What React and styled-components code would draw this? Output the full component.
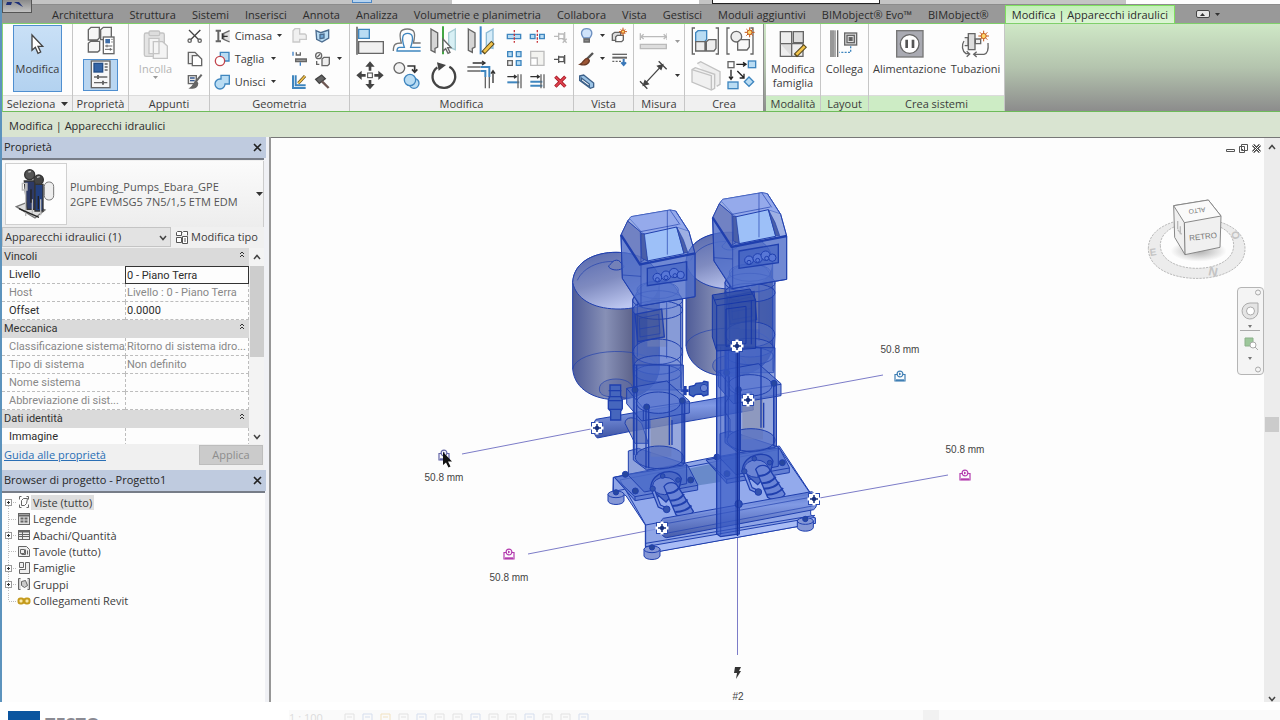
import React from "react";
import styled, { createGlobalStyle, css } from "styled-components";

const Global = createGlobalStyle`
  * { box-sizing: border-box; }
  html, body { margin: 0; height: 100%; overflow: hidden; }
  body, button, input, select, table {
    font-family: "Open Sans", "Noto Sans", sans-serif;
    font-size: 11px;
    line-height: 14px;
    color: #3c3c3c;
  }
  #root { height: 100%; }
`;

/* ---------- shell ---------- */
const Shell = styled.div`
  height: 100vh;
  display: flex;
  flex-direction: column;
  background: #fdfdfd;
`;
const Frame = styled.div`
  flex: 1;
  min-height: 0;
  display: flex;
  flex-direction: column;
  border-left: 2px solid #5c93bd;
`;

/* ---------- title bar ---------- */
const TitleBar = styled.header`
  position: relative;
  height: 5px;
  flex: none;
  display: flex;
  justify-content: flex-end;
  background: #c4c4c4;
  border-bottom: 1px solid #8c8c8c;
`;
const QuickMark = styled.span`
  width: 20px;
  height: 3px;
  margin-right: 80px;
  background: #b5d3f0;
  border: 1px solid #4b86c4;
  border-top: 0;
`;
const TitleCaption = styled.div`
  width: 247px;
  background: #fdfdfd;
  margin-right: 13px;
`;
const SearchStub = styled.div`
  width: 168px;
  background: #fff;
  border: 1px solid #222;
  border-top: 0;
  margin-right: 246px;
`;
const TitleEnd = styled.div`
  width: 154px;
  background: #fdfdfd;
`;
const AppButton = styled.button`
  position: absolute;
  left: 0;
  top: 0;
  width: 30px;
  height: 13px;
  padding: 0;
  border: 1px solid #555;
  border-top: 0;
  background: linear-gradient(#8a8a8a, #c2c2c2);
  z-index: 2;
  svg { display: block; }
`;

/* ---------- ribbon tabs ---------- */
const Tabs = styled.nav`
  height: 19px;
  flex: none;
  display: flex;
  padding-left: 42px;
  background: #999;
  border-bottom: 1px solid #7fd06a;
`;
const Tab = styled.button`
  border: 0;
  margin: 0;
  padding: 1px 8px 0;
  background: none;
  white-space: nowrap;
  color: #2c2c2c;
  ${(p) =>
    p.$active &&
    css`
      margin-left: 8px;
      padding: 0 6px;
      background: linear-gradient(#c3efb8, #dcf5d5);
      border: 1px solid #7fe05f;
      border-bottom: 0;
    `}
`;
const TabTools = styled.div`
  display: flex;
  align-items: center;
  gap: 5px;
  margin-left: 21px;
`;
const MinimizeRibbon = styled.button`
  width: 14px;
  height: 8px;
  padding: 0;
  border: 1px solid #444;
  border-radius: 2px;
  background: #e6e6e6;
  display: flex;
  align-items: center;
  justify-content: center;
`;

/* ---------- ribbon ---------- */
const Ribbon = styled.section`
  height: 88px;
  flex: none;
  display: flex;
  border-left: 1px solid #8bd47a;
  border-bottom: 1px solid #6ebb5a;
  background: linear-gradient(#cfe8c6, #b4c4ae 50%, #8c8c8c);
`;
const Panel = styled.div`
  width: ${(p) => p.$w}px;
  flex: none;
  display: flex;
  flex-direction: column;
  background: #fdfdfd;
  border-right: 1px solid #c6c6c6;
  ${(p) => p.$gap && css`margin-right: 2px; border-right-color: #8d8d8d;`}
`;
const PanelBody = styled.div`
  flex: 1;
  display: flex;
  align-items: flex-start;
  justify-content: center;
  gap: ${(p) => p.$gap || 0}px;
`;
const PanelTitle = styled.div`
  height: 16px;
  display: flex;
  align-items: center;
  justify-content: center;
  gap: 6px;
  white-space: nowrap;
  border-top: 1px solid #dcdcdc;
  background: ${(p) => (p.$green ? "#cdecc5" : "#f0f0f0")};
`;
const Tool = styled.button`
  border: 0;
  background: none;
  padding: 0;
  display: flex;
  align-items: center;
  justify-content: ${(p) => (p.$left ? "flex-start" : "center")};
  gap: 4px;
  min-width: 0;
  white-space: nowrap;
  svg { flex: none; }
`;
const BigTool = styled.button`
  width: ${(p) => p.$w}px;
  height: 67px;
  margin-top: 1px;
  border: 1px solid ${(p) => (p.$on ? "#4f8fd0" : "transparent")};
  background: ${(p) => (p.$on ? "linear-gradient(#c9e0f6, #b3d2f0)" : "none")};
  padding: 0;
  display: flex;
  flex-direction: column;
  align-items: center;
  color: ${(p) => (p.$dim ? "#b4b4b4" : "#3c3c3c")};
  white-space: nowrap;
`;
const BigIcon = styled.span`
  height: 36px;
  display: flex;
  align-items: center;
  justify-content: center;
`;
const Grid = styled.div`
  display: grid;
  grid-template-columns: ${(p) => p.$cols};
  grid-auto-rows: ${(p) => p.$row || 23}px;
`;
const PropToggle = styled(Tool)`
  width: 35px;
  height: ${(p) => (p.$on ? 32 : 33)}px;
  border: 1px solid ${(p) => (p.$on ? "#4f8fd0" : "transparent")};
  background: ${(p) => (p.$on ? "#b9d6f1" : "none")};
`;
const OptionsBar = styled.div`
  height: 25px;
  flex: none;
  padding: 7px 7px 0;
  background: #d9e4d1;
  color: #2a2a2a;
`;

/* ---------- work area ---------- */
const Work = styled.main`
  flex: 1;
  min-height: 0;
  display: flex;
`;
const Side = styled.aside`
  width: 269px;
  flex: none;
  display: flex;
  flex-direction: column;
  padding-right: 3px;
  background: #f0f1f5;
  border-right: 2px solid #979797;
`;
const DockTitle = styled.h2`
  height: 21px;
  flex: none;
  margin: 0;
  padding: 0 4px 1px 2px;
  display: flex;
  align-items: center;
  justify-content: space-between;
  font-size: 11px;
  font-weight: 400;
  color: #262626;
  background: #bfcbdf;
`;
const CloseButton = styled.button`
  border: 0;
  background: none;
  padding: 0;
  width: 9px;
  height: 9px;
  svg { display: block; }
`;
const Properties = styled.section`
  margin-right: 2px;
  padding-top: 1px;
  border-top: 2px solid #777d88;
  background: #f0f0f0;
`;
const TypePicker = styled.button`
  width: 100%;
  height: 66px;
  padding: 0 0 0 3px;
  border: 0;
  border-right: 1px solid #ccc;
  display: flex;
  align-items: center;
  gap: 3px;
  text-align: left;
  line-height: 15px;
  color: #555;
  background: linear-gradient(#fbfbfb, #ededed);
`;
const Thumb = styled.span`
  width: 62px;
  height: 62px;
  border: 1px solid #d0d0d0;
  background: #fdfdfd;
  display: flex;
  align-items: center;
  justify-content: center;
`;
const TypeText = styled.span`
  flex: 1;
  white-space: nowrap;
`;
const FilterRow = styled.div`
  height: 21px;
  display: flex;
  align-items: flex-start;
  gap: 5px;
`;
const EditType = styled(Tool)`
  height: 20px;
  gap: 2px;
`;
const SelectBox = styled.label`
  position: relative;
  width: 169px;
  svg { position: absolute; right: 4px; top: 8px; pointer-events: none; }
`;
const Select = styled.select`
  appearance: none;
  width: 100%;
  height: 20px;
  padding: 0 2px;
  border: 1px solid #c4c4c4;
  border-radius: 0;
  background: #e3e3e3;
  color: #333;
`;
const GridWrap = styled.div`
  height: 196px;
  display: flex;
  overflow: hidden;
`;
const PropTable = styled.table`
  width: 247px;
  table-layout: fixed;
  border-collapse: separate;
  border-spacing: 0;
  font-family: Roboto, "Open Sans", sans-serif;
  background: #fdfdfd;
`;
const GroupCell = styled.th`
  height: 18px;
  padding: 0 4px 0 2px;
  font-weight: 400;
  text-align: left;
  background: #dadada;
  color: #333;
  div { display: flex; justify-content: space-between; }
`;
const NameCell = styled.th`
  height: 18px;
  padding: 0 0 0 7px;
  white-space: nowrap;
  text-align: left;
  font-weight: 400;
  color: ${(p) => (p.$dim ? "#888" : "#2c2c2c")};
  border-bottom: 1px dashed #bdbdbd;
`;
const ValueCell = styled.td`
  height: 18px;
  padding: 0 0 0 1px;
  white-space: nowrap;
  color: ${(p) => (p.$dim ? "#888" : "#2c2c2c")};
  border-bottom: 1px dashed #bdbdbd;
  border-left: 1px dashed #bdbdbd;
  border-right: 1px dashed #bdbdbd;
  ${(p) => p.$edit && css`border: 1px solid #333;`}
`;
const ValueInput = styled.input`
  display: block;
  width: 100%;
  height: 16px;
  border: 0;
  padding: 0;
  background: none;
  outline: 0;
  color: inherit;
  font-family: inherit;
`;
const GridScroll = styled.div`
  flex: 1;
  display: flex;
  flex-direction: column;
  align-items: center;
  padding: 6px 0 4px;
  gap: 6px;
  background: #f3f3f3;
`;
const GridThumb = styled.span`
  width: 14px;
  height: 91px;
  background: #cdcdcd;
`;
const GridSpacer = styled.span`
  flex: 1;
`;
const PropFooter = styled.div`
  height: 26px;
  padding: 1px 1px 0 2px;
  display: flex;
  justify-content: space-between;
  background: #f0f0f0;
  a { color: #2a6fb5; padding-top: 3px; }
`;
const Apply = styled.button`
  width: 64px;
  height: 20px;
  padding: 0;
  border: 1px solid #bdbdbd;
  background: #cbcbcb;
  color: #8d8d8d;
`;
const Browser = styled.section`
  flex: 1;
  margin-right: 1px;
  padding-top: 1px;
  border-top: 2px solid #777d88;
  background: #fdfdfd;
`;
const Tree = styled.ul`
  list-style: none;
  margin: 0;
  padding: 0 0 0 2px;
  height: 115px;
  display: flex;
  flex-direction: column;
`;
const TreeItem = styled.li`
  flex: 1;
  min-height: 0;
  display: flex;
  align-items: center;
  svg { flex: none; }
`;
const TreeLabel = styled.span`
  padding: 0 2px;
  line-height: 15px;
  background: ${(p) => (p.$on ? "#dedede" : "none")};
`;

/* ---------- canvas ---------- */
const Canvas = styled.section`
  position: relative;
  flex: 1;
  min-width: 0;
  overflow: hidden;
  background: #fdfdfd;
  border-top: 1px solid #777;
`;
const Tag = styled.span`
  position: absolute;
  left: ${(p) => p.$x - 40}px;
  top: ${(p) => p.$y - 6}px;
  width: 80px;
  text-align: center;
  font-family: "Liberation Sans", sans-serif;
  font-size: 10px;
  color: #444;
`;
const WindowTools = styled.div`
  position: absolute;
  right: 3px;
  top: 6px;
  display: flex;
  gap: 4px;
`;
const CubePlace = styled.div`
  position: absolute;
  right: 17px;
  top: 59px;
`;
const NavBar = styled.div`
  position: absolute;
  right: 0;
  top: 149px;
  width: 27px;
  height: 88px;
  border: 1px solid #b5b5b5;
  border-radius: 4px;
  background: #f4f4f4;
  svg { display: block; }
`;
const VScroll = styled.div`
  width: 16px;
  flex: none;
  display: flex;
  flex-direction: column;
  justify-content: space-between;
  align-items: center;
  padding: 6px 0 0;
  background: #ececec;
  border-top: 1px solid #777;
`;
const VThumb = styled.span`
  width: 14px;
  height: 15px;
  margin-top: 2px;
  background: #cbcbcb;
`;

/* ---------- footer ---------- */
const Footer = styled.footer`
  height: 18px;
  flex: none;
  display: flex;
  overflow: hidden;
  background: #fff;
  padding: 8px 0 0 8px;
`;
const Brand = styled.div`
  width: 281px;
  display: flex;
  gap: 5px;
  font-size: 18px;
  line-height: 28px;
  font-weight: 700;
  color: #8b8b93;
`;
const BrandMark = styled.span`
  width: 32px;
  height: 32px;
  margin-top: 1px;
  background: #0b559f;
`;
const StatusBar = styled.div`
  flex: 1;
  display: flex;
  align-items: flex-start;
  background: #fafafa;
  color: #dcdcdc;
  line-height: 16px;
`;
const StatusThumb = styled.span`
  width: 16px;
  height: 10px;
  margin-left: 316px;
  background: #f1f1f1;
`;

/* ---------- icons ---------- */
/* Icons are drawn on a grid of three units to the pixel. */
const Icon = ({ v, children, ...rest }) => {
  const [, , w, h] = v.split(" ").map(Number);
  return (
    <svg viewBox={v} width={w / 3} height={h / 3} fill="none" strokeWidth="4" stroke="#666" aria-hidden="true" {...rest}>
      {children}
    </svg>
  );
};
const Caret = ({ dim, up, wide }) => (
  <svg width={wide ? 7 : 5} height={wide ? 4 : 3} viewBox="0 0 5 3" preserveAspectRatio="none" aria-hidden="true">
    <path d={up ? "M0 3h5L2.500 0z" : "M0 0h5L2.500 3z"} fill={dim ? "#999" : "#333"} />
  </svg>
);
const Chevron = ({ up }) => (
  <svg width="8" height="6" viewBox="0 0 8 6" fill="none" stroke="#444" strokeWidth="1.500" aria-hidden="true">
    <path d={up ? "M1 5l3-3.500L7 5" : "M1 1l3 3.500L7 1"} />
  </svg>
);
const Cross = () => (
  <svg width="9" height="9" viewBox="0 0 9 9" stroke="#222" strokeWidth="1.600" aria-hidden="true">
    <path d="M1 1l7 7M8 1l-7 7" />
  </svg>
);
const B = "#b9dcf3";
const BL = "#3f86bf";

const Burst = ({ x, y, r }) => (
  <g stroke="#c55a1c" strokeWidth="3">
    <path d={`M${x} ${y - r - 5}v${2 * r + 10}M${x - r - 5} ${y}h${2 * r + 10}M${x - r} ${y - r}l${2 * r} ${2 * r}M${x + r} ${y - r}l${-2 * r} ${2 * r}`} />
    <circle cx={x} cy={y} r={r * 0.7} fill="#ffd86a" />
  </g>
);
const Brackets = ({ x }) => <path d={`M${x + 10} 86h-8v78h8M${x + 72} 86h8v78h-8`} strokeWidth="4" />;

const ArrowIcon = () => (
  <Icon v="90 92 45 64"><path d="M96 98v46l10-9 8 18 8-4-8-17h14z" fill="#fff" stroke="#444" /></Icon>
);
const TypePropsIcon = () => (
  <Icon v="255 82 90 88">
    <g fill="#f6f6f6"><path d="M262 93l8-7h25v32l-6 6h-27zM299 93l8-7h24v32l-6 5h-26zM262 134l7-6h27v27l-6 5h-28z" /></g>
    <rect x="307" y="115" width="32" height="50" fill="#fff" />
    <rect x="313" y="121" width="14" height="13" fill="#3f6ea8" stroke="none" />
    <path d="M331 122h4M331 130h4M312 142h22M312 152h22M318 138v8M328 148v8" strokeWidth="3" />
  </Icon>
);
const PropsIcon = () => (
  <Icon v="265 182 66 88">
    <rect x="269" y="185" width="56" height="80" fill="#f7f7f7" />
    <rect x="277" y="192" width="26" height="26" fill="#3565a6" stroke="#244f88" />
    <path d="M309 194h9M309 203h9M309 212h9M277 233h40M277 250h40" /><path d="M289 227v12M304 244v12" strokeWidth="6" />
  </Icon>
);
const PasteIcon = () => (
  <Icon v="432 78 84 92" stroke="#c4c4c4">
    <rect x="439" y="90" width="60" height="70" rx="5" fill="#e4e4e4" /><rect x="453" y="84" width="32" height="14" rx="4" fill="#ddd" />
    <path d="M453 106h30v46h-30zM466 116h28l14 13v37h-42z" fill="#f4f4f4" />
  </Icon>
);
const ScissorsIcon = () => (
  <Icon v="562 84 48 48"><path d="M568 90l30 30M602 90l-30 30" stroke="#444" /><circle cx="570" cy="122" r="5" /><circle cx="600" cy="122" r="5" /></Icon>
);
const CopyIcon = () => (
  <Icon v="562 154 48 48"><path d="M566 158h20l8 8v26h-28z" fill="#eee" /><path d="M578 168h18l10 10v20h-28z" fill="#fff" /></Icon>
);
const MatchIcon = () => (
  <Icon v="562 224 48 48"><path d="M566 229h24v24h-24z" fill="#e6e6e6" /><path d="M571 236h14M571 244h14" stroke="#3a5c94" /><path d="M606 226l-20 24" strokeWidth="6" /><path d="M590 246c-8 2-8 14-18 20 14 2 22-4 22-14z" fill="#666" /></Icon>
);
const CopeIcon = () => (
  <Icon v="643 84 50 48"><path d="M648 92h16M648 124h16M656 92v32" strokeWidth="6" /><path d="M690 92l-18 8v18l18 8" fill="#ddd" /><path d="M670 109h14M668 100v18" stroke="#333" /></Icon>
);
const CutIcon = () => (
  <Icon v="643 154 50 48"><path d="M662 158h26v26h-26z" fill={B} stroke={BL} /><circle cx="661" cy="184" r="14" fill="#fff" stroke="#c2464e" /></Icon>
);
const JoinIcon = () => (
  <Icon v="643 224 50 48"><path d="M664 228h25v26h-13a15 15 0 1 1-15-15h3z" fill={B} stroke={BL} /></Icon>
);
const WallOpenIcon = () => (
  <Icon v="874 84 50 48" stroke="#c9c9c9"><path d="M880 92l6-6h14v16h16l4 4v12h-20v8h-20z" fill="#f0f0f0" /></Icon>
);
const FaceIcon = () => (
  <Icon v="944 84 50 48" stroke="#4b6c8f"><path d="M950 92l14 6 24-8v24l-20 12-16-8z" fill={B} /><path d="M962 104l12-2v12l-12 2z" fill="#6fa8d6" /></Icon>
);
const BeamIcon = () => (
  <Icon v="874 154 50 48"><path d="M888 178h32v8h-32z" fill="#999" /><path d="M890 158v8h12v-8" /><path d="M880 156v12M902 188v10" stroke="#3e7fc4" /></Icon>
);
const SplitFaceIcon = () => (
  <Icon v="944 154 50 48"><circle cx="958" cy="168" r="9" /><path d="M954 172l8-8M952 184v10h8" /><path d="M968 178l6-5h16v20l-5 5h-17z" fill="#eee" /></Icon>
);
const WallJoinIcon = () => (
  <Icon v="874 224 50 48"><path d="M880 228v38h38M888 228v30h30" stroke={BL} strokeWidth="6" /><path d="M916 230l-20 22" stroke="#5d4a1d" strokeWidth="9" /><path d="M916 230l-20 22" stroke="#f0c04a" strokeWidth="5" /></Icon>
);
const HammerIcon = () => (
  <Icon v="944 224 50 48"><path d="M949 240l18-13 11 11-18 14z" fill="#666" stroke="#444" /><path d="M968 246l20 20" strokeWidth="7" stroke="#6d5752" /></Icon>
);
const AlignIcon = () => (
  <Icon v="27 82 90 90"><path d="M33 84v84" stroke="#444" /><path d="M38 92h32v27H38z" fill={B} stroke={BL} /><path d="M38 129h74v35H38z" fill="#f0f0f0" /></Icon>
);
const OffsetIcon = () => (
  <Icon v="138 82 90 90"><path d="M142 157c0-20 6-24 24-24-8-30-4-42 18-42s26 12 18 42h22" stroke="#777" /><path d="M224 146h-30c10-30 6-42-9-42s-20 12-10 42h-14c-6 0-8 4-8 11h71" stroke={BL} /></Icon>
);
const MirrorPickIcon = () => (
  <Icon v="251 80 90 94"><path d="M257 92l20 12v42l-8 4v12l-12-6z" fill="#d5d5d5" /><path d="M330 92l-20 12v42l20 8z" fill="#d8f0f5" stroke="#a6cbd3" /><path d="M293 84v84" stroke="#43a744" strokeWidth="6" /><path d="M293 122v36l8-7 7 14 6-3-7-14h10z" fill="#fff" /></Icon>
);
const MirrorDrawIcon = () => (
  <Icon v="360 80 90 94"><path d="M367 92l20 12v42l-8 4v12l-12-6z" fill="#d5d5d5" /><path d="M441 92l-20 12v42l20 4z" fill="#d5ecf9" stroke="#8dbbd6" /><path d="M404 84v84" stroke="#3e86c8" strokeWidth="6" /><path d="M441 132l-30 32" stroke="#57481e" strokeWidth="14" /><path d="M439 134l-25 27" stroke="#f2c44b" strokeWidth="8" /></Icon>
);
const MoveIcon = () => (
  <Icon v="28 178 90 90" stroke="#444" fill="#444"><path d="M73 182l14 16H59zM73 266l14-16H59zM32 224l16-14v28zM114 224l-16-14v28z" stroke="none" /><path d="M73 196v14M73 238v14M46 224h14M86 224h14" strokeWidth="8" /><rect x="66" y="217" width="14" height="14" fill="#fff" strokeWidth="3" /></Icon>
);
const CopyElIcon = () => (
  <Icon v="138 178 90 90"><circle cx="160" cy="202" r="16" fill="#f2f2f2" /><path d="M184 196h22v16M198 206l8 9 8-9" stroke="#333" strokeWidth="5" /><circle cx="204" cy="248" r="15" fill={B} stroke={BL} /><circle cx="192" cy="238" r="17" fill={B} stroke={BL} /></Icon>
);
const RotateIcon = () => (
  <Icon v="251 178 90 94"><path d="M276 203a34 34 0 1 0 36-2" stroke="#444" strokeWidth="7" /><path d="M275 188l27 8-22 17z" fill="#444" stroke="none" /></Icon>
);
const TrimIcon = () => (
  <Icon v="360 178 90 94"><path d="M364 202h40M364 214h40M418 232v34M430 232v34" /><path d="M404 202h26v30M404 214h14v18" stroke={BL} strokeWidth="6" /><path d="M380 190h36M408 184l9 6-9 6M441 250v-36M435 222l6-9 6 9" stroke="#333" /></Icon>
);
const SplitIcon = ({ gap }) => (
  <Icon v="476 84 50 48"><path d={gap ? "M480 103h14v13h-14zM508 103h14v13h-14z" : "M480 103h40v13h-40z"} fill={B} stroke={BL} /><path d="M501 90v38" stroke="#c8373c" strokeDasharray="7 4" /></Icon>
);
const PinIcon = ({ dim }) => (
  <Icon v="614 154 50 48" stroke={dim ? "#bbb" : "#555"}><path d="M620 179h14M634 168v22M634 172h16v14h-16M652 166v26" />{dim && <path d="M646 186l12 12M658 186l-12 12" />}</Icon>
);
const ArrayIcon = () => (
  <Icon v="476 152 50 52"><path d="M481 157h14v15h-14zM507 157h14v15h-14zM507 184h14v14h-14z" stroke={BL} fill={B} /><path d="M481 184h14v14h-14z" fill="#eee" /></Icon>
);
const ScaleIcon = () => (
  <Icon v="546 152 50 52" stroke="#bdbdbd"><path d="M551 156h40v42h-40z" fill="#f3f3f0" /><path d="M551 176h20v22h-20z" fill="#fff" /></Icon>
);
const TrimOneIcon = ({ multi }) => (
  <Icon v="476 222 50 50"><path d="M480 233h26M500 228l7 5-7 5" stroke="#333" /><path d={multi ? "M480 248h36M480 260h36" : "M480 250h36"} stroke={BL} strokeWidth="6" /><path d="M512 226v42M521 226v42" /></Icon>
);
const DeleteIcon = () => (
  <Icon v="616 224 50 48"><path d="M626 232l30 30M656 232l-30 30" stroke="#a51822" strokeWidth="10" /><path d="M627 233l28 28M655 233l-28 28" stroke="#e04350" strokeWidth="5" /></Icon>
);
const BulbIcon = () => (
  <Icon v="698 82 48 50"><path d="M712 115c-12-14-6-28 9-28s21 14 9 28z" fill="#cfe3fa" stroke="#6c8fc0" /><path d="M713 118h16v9h-16z" fill="#888" /></Icon>
);
const BoxesIcon = () => (
  <Icon v="798 82 50 50"><path d="M802 104l7-6h18v18l-6 6h-19z" fill="#ddd" /><path d="M812 112l5-5h18v14l-5 5h-18z" fill="#fff" /><Burst x={834} y={96} r={7} /></Icon>
);
const BrushIcon = () => (
  <Icon v="698 154 50 48"><path d="M743 160l-20 20" stroke="#555" strokeWidth="7" /><path d="M726 176c-10 0-12 14-22 18 14 4 28 0 28-12z" fill="#9d5635" stroke="#6b3a25" /></Icon>
);
const LineIcon = () => (
  <Icon v="796 154 50 48"><path d="M800 164h44" /><path d="M800 174h44" strokeWidth="6" /><path d="M800 185h26" strokeDasharray="6 4" /><path d="M834 178v16M827 188l7 8 7-8" stroke="#3977b8" strokeWidth="6" /></Icon>
);
const BarIcon = () => (
  <Icon v="698 224 50 48" stroke="#3d618a"><path d="M703 230l12-3 30 24v12l-10 4-32-24z" fill="#9cc4e6" /><path d="M708 236l24 18v8l-24-18z" fill="#fff" /></Icon>
);
const MeasureIcon = () => (
  <Icon v="26 96 86 56" stroke="#bbb"><path d="M32 110h76M40 103l-8 7 8 7M100 103l8 7-8 7M30 100v20M110 100v20" /><path d="M30 133h78v13H30z" fill="#ddd" /></Icon>
);
const DimIcon = () => (
  <Icon v="24 178 90 90" stroke="#444"><path d="M42 252l54-58" /><path d="M40 254l5-14 10 10zM98 192l-5 14-10-10z" fill="#444" /><path d="M30 242l22 22M86 182l24 24" /></Icon>
);
const GroupIcon = () => (
  <Icon v="184 80 90 90"><Brackets x={186} /><path d="M198 100l7-6h26v26l-6 7h-27z" fill={B} stroke={BL} /><path d="M198 127h28v28h-28zM230 127l7-6h22v26l-6 8h-23z" fill="#eee" /></Icon>
);
const AssemblyIcon = () => (
  <Icon v="291 80 96 90"><Brackets x={292} /><circle cx="322" cy="112" r="16" fill="#eee" /><path d="M326 128l8-7h27v22l-7 9h-28z" fill="#f8f8f8" /><Burst x={362} y={99} r={10} /></Icon>
);
const PartsIcon = () => (
  <Icon v="180 176 96 94" stroke="#c2c2c2"><path d="M202 190l10-6 58 30v38l-10 6" fill="#eee" /><path d="M186 208l10-6 58 20v42l-10 5-58-24z" fill="#f0f0f0" /><path d="M186 208l58 18v42" /></Icon>
);
const SimilarIcon = () => (
  <Icon v="286 176 96 94"><rect x="292" y="184" width="18" height="18" /><rect x="353" y="182" width="22" height="20" fill={B} stroke={BL} /><rect x="292" y="245" width="30" height="20" fill={B} stroke={BL} /><path d="M355 230l14 14-14 14-14-14z" fill={B} stroke={BL} /><path d="M317 192h28M337 186l9 6-9 6M301 208v28M295 229l6 8 6-8M320 212l20 20M340 220v13h-13" stroke="#222" /></Icon>
);
const EditFamilyIcon = () => (
  <Icon v="444 82 90 90"><path d="M451 90h34v36h34v38h-68z" fill="#eee" /><path d="M451 126h34v38M490 90h30v33h-30z" fill="#ddd" /><path d="M526 132l-30 30" stroke="#57481e" strokeWidth="14" /><path d="M524 134l-25 25" stroke="#f2c44b" strokeWidth="8" /></Icon>
);
const ConnectIcon = () => (
  <Icon v="598 82 92 90"><path d="M604 86v80M610 86v80M624 86v80" /><path d="M616 86v80" stroke="#aaa" strokeWidth="6" /><rect x="645" y="94" width="36" height="36" fill="#ddd" /><rect x="652" y="101" width="22" height="22" /><rect x="659" y="108" width="8" height="8" fill="#555" /><path d="M663 134v18h-34" stroke={BL} strokeDasharray="6 4" /></Icon>
);
const PowerIcon = () => (
  <Icon v="794 82 90 90"><rect x="799" y="87" width="79" height="79" fill="#a9aab2" stroke="#777" /><circle cx="838" cy="127" r="28" fill="#fff" /><path d="M829 114v25M848 114v25" strokeWidth="8" stroke="#555" /></Icon>
);
const PipingIcon = () => (
  <Icon v="990 82 96 90"><path d="M1015 96h20v48h-20z" fill="#ddd" /><path d="M1004 108h10v24h-10M1036 112h16v14h-16z" fill="#eee" /><path d="M1002 118c-8 12-6 30 6 38h10M1074 124c2 20-2 32-12 34h-30M1010 149l9 8-9 8M1040 150l-9 8 9 8" /><Burst x={1061} y={103} r={11} /></Icon>
);

/* ---------- tree icons ---------- */
const treeGlyphs = {
  views: <path d="M2 4V1h2M9 1h2v3M2 9v3h2M9 12h2V9M4 5l2-2h4l-1 5-2 2H4z" />,
  legend: <><rect x="1" y="1" width="11" height="11" fill="#ddd" /><path d="M1 3h11M3 6h3M7 6h3M3 9h3M7 9h3" strokeWidth="2" /></>,
  table: <><rect x="1" y="2" width="11" height="9" fill="#eee" /><path d="M1 3h11" strokeWidth="2" /><path d="M1 6h11M1 8h11M5 3v8" /></>,
  sheet: <path d="M1 2h8l3 3v7H1zM3 5h4v4H3zM8 5v5H4M10 6v4" fill="#eee" />,
  family: <path d="M2 1h4v5H2zM8 1h4v11H2V8h6z" fill="#eee" />,
  group: <path d="M3 1H1v11h2M10 1h2v11h-2M4 4l4-1 2 5-3 2-3-2z" fill="#ccc" />,
  link: <g stroke="#c49a1c" strokeWidth="2" fill="#fbe9a8"><rect x="1" y="4" width="5" height="5" rx="2" /><rect x="7" y="4" width="5" height="5" rx="2" /></g>,
};
const TreeIcon = ({ kind, plus, first, last }) => (
  <svg width="27" height="16" viewBox="0 0 27 16" fill="none" stroke="#666" aria-hidden="true">
    <path d={`M4.500 ${first ? 8 : 0}V${last ? 8 : 16}M5 8.500h7`} stroke="#bbb" strokeDasharray="1 1" />
    {plus && <><rect x="1.500" y="5.500" width="6" height="6" fill="#fff" stroke="#999" /><path d="M3 8.500h3M4.500 7v3" stroke="#333" /></>}
    <g transform="translate(13.500 1.500)">{treeGlyphs[kind]}</g>
  </svg>
);

/* ---------- pump model ---------- */
const NAVY = "#1f3fae";
const PumpHead = ({ t }) => (
  <g transform={t} stroke={NAVY} strokeWidth="3">
    <path d="M183 150l20-42 10-13 117-20 17 3 40 62 18 65v130l-162 28-56-83z" fill="#5f7dd2" fillOpacity=".6" />
    <path d="M203 108l10-13 117-20 17 3 38 60-30-10-100 24-45-50z" fill="#93a9ec" fillOpacity=".85" stroke="#4868c4" strokeWidth="2" />
    <path d="M183 150l57 88 165-33v130l-165 28-53-83z" fill="#4b69c6" fillOpacity=".55" />
    <path d="M203 108l38 32 14 20-4 66-14 8-54-84z" fill="#6173b8" fillOpacity=".75" strokeWidth="2" />
    <path d="M250 148l100-22 22 80-110 22z" fill="#9dc0f8" />
    <path d="M243 146l10 0 10 82-18-8zM350 126l22 78h12l-14-40z" fill="#4a5fa8" strokeWidth="2" />
    <path d="M203 108l38 32 115-22M330 75l30 44M241 140l2 94" strokeWidth="2" />
    <path d="M183 150l57 88 165-33" strokeWidth="7" />
    <path d="M347 78l40 62 18 65M322 76v133M243 240v122M187 270l56 4" strokeWidth="2" />
    <path d="M262 250l118-20v55l-118 17z" fill="#3c5ec2" fillOpacity=".6" strokeWidth="4" />
    <g strokeWidth="3" fill="#5877d6"><circle cx="292" cy="278" r="13" /><circle cx="318" cy="272" r="14" /><circle cx="342" cy="264" r="14" /><circle cx="362" cy="270" r="11" /><circle cx="292" cy="284" r="6" /><circle cx="318" cy="278" r="6" /><circle cx="345" cy="272" r="6" /></g>
  </g>
);
const Tank = ({ x, y, h }) => (
  <g transform={`translate(${x} ${y})`} stroke={NAVY} strokeWidth="3">
    <path d={`M0 90C4 25 70 0 130 0s126 25 130 90v${h}c-8 65-70 92-130 92S6 ${h + 155} 0 ${h + 90}z`} fill="url(#tankBody)" />
    <path d="M0 90C4 25 70 0 130 0s126 25 130 90c0 60-60 82-130 80S10 140 0 90z" fill="url(#tankDome)" />
    <path d={`M0 ${h + 90}c10-65 240-75 260 0M14 84C34 40 90 24 130 28`} strokeWidth="2" fill="none" />
    <path d="M108 44c0-8 8-8 12-16 6-6 18-6 22 0 4 8 12 8 12 16-10 12-36 12-46 0z" fill="#7381b8" />
    <path d={`M80 ${h + 150}c0-40 100-40 100 0s-20 24-50 24-50-4-50-24z`} fill="#5e6ca8" fillOpacity=".5" strokeWidth="2" />
  </g>
);
const Motor = ({ t }) => (
  <g transform={t} stroke={NAVY} strokeWidth="3">
    <path d="M218 345l20-35c30-30 90-30 110 0l20 35v160l-4 110H222l-4-100z" fill="#3f5fc0" fillOpacity=".62" />
    <path d="M262 375h60v110h-60z" fill="#7b83a8" fillOpacity=".5" stroke="none" />
    <path d="M222 370v240M232 345v170M362 360v250M320 350v170" strokeWidth="3" />
    <g fill="#6c87da" fillOpacity=".25"><ellipse cx="293" cy="315" rx="62" ry="26" /><ellipse cx="293" cy="345" rx="75" ry="28" /><ellipse cx="293" cy="375" rx="75" ry="28" /><ellipse cx="293" cy="500" rx="74" ry="38" /><ellipse cx="293" cy="540" rx="70" ry="28" /><ellipse cx="293" cy="565" rx="70" ry="26" /></g>
    <path d="M225 388l80-16 8 84-80 14z" fill="#2e4596" fillOpacity=".5" strokeWidth="4" />
    <path d="M238 400l58-12 4 58-60 10zM238 432l60-10" strokeWidth="2" />
  </g>
);
const PumpBase = ({ t }) => (
  <g transform={t} stroke={NAVY} strokeWidth="3">
    <path d="M163 322l50-10 170-26 30 58v16l-188 32z" fill="#5673cc" fillOpacity=".78" />
    <path d="M163 322l62 58 188-34M225 380v12" fill="none" />
    <path d="M205 243l30-8 145 48v58l-127 25-48-50z" fill="#4565c6" fillOpacity=".6" />
    <path d="M220-15h150v300l-110 15-40-30z" fill="#4262c4" fillOpacity=".55" />
    <path d="M272 140h62v120h-62z" fill="#8b90ae" fillOpacity=".65" stroke="none" />
    <ellipse cx="298" cy="262" rx="72" ry="34" fill="#506cc4" fillOpacity=".65" />
    <path d="M200 55l120-22 68 60v36l-143 24-45-52z" fill="#4c6bc8" fillOpacity=".7" />
    <path d="M200 55l50 60 138-20M250 115v38" fill="none" />
    <ellipse cx="295" cy="98" rx="66" ry="32" fill="#6380d6" fillOpacity=".5" />
    <path d="M258 115v180M266 115v180M366 90v190M374 90v190M222-15v270M230-15v270M328-15v240M336 150v75" strokeWidth="4" />
    <g fill="#27479f"><circle cx="225" cy="60" r="9" /><circle cx="260" cy="111" r="9" /><circle cx="367" cy="92" r="9" /><circle cx="196" cy="313" r="9" /><circle cx="392" cy="330" r="9" /><circle cx="226" cy="363" r="9" /></g>
    <path d="M272 356c0-56 80-66 92-30l-6 26-40 44z" fill="#4c69c4" strokeWidth="4" />
    <ellipse cx="314" cy="348" rx="36" ry="26" fill="#6b84d4" />
    <path d="M312 350c10-16 34-16 42 0l46 74c-8 16-40 22-52 10z" fill="#6a84d6" strokeWidth="4" />
    <path d="M318 370c16 0 32-6 40-18M330 392c18 0 34-8 42-20M336 408c20 0 40-8 46-20M346 426c20 0 40-8 48-20" strokeWidth="6" fill="none" />
    <path d="M280 362l18 46 26 12" strokeWidth="12" fill="none" /><path d="M280 362l18 46 26 12" strokeWidth="5" stroke="#7d95e0" fill="none" />
    <g fill="#3353b0"><circle cx="278" cy="356" r="8" /><circle cx="320" cy="418" r="10" /><circle cx="308" cy="318" r="7" /><circle cx="354" cy="330" r="7" /></g>
  </g>
);
const Foot = ({ x, y }) => (
  <g transform={`translate(${x} ${y})`} stroke={NAVY} strokeWidth="3" fill="#8597d6">
    <path d="M-24-12v20c4 14 44 14 48 0v-20z" /><ellipse cy="-12" rx="24" ry="10" /><circle cy="-18" r="8" fill="#27479f" />
  </g>
);
const Node = ({ x, y }) => (
  <g transform={`translate(${x} ${y})`}>
    <rect x="-5.500" y="-5.500" width="11" height="11" fill="#fff" stroke="#2a4bb0" />
    <path d="M-6.500 0h2M4.500 0h2M0-6.500v2M0 4.500v2" stroke="#fff" strokeWidth="3" />
    <path d="M-4 0h8M0-4v8" stroke="#16307d" strokeWidth="1.500" /><circle r="2.200" fill="#16307d" />
  </g>
);
const Port = ({ x, y, c }) => (
  <g transform={`translate(${x} ${y})`} fill="none" stroke={c} strokeWidth="1.200">
    <path d="M-2.500-1.500H-5V5H5v-6.500H2.500" /><circle cy="-2" r="2.900" /><path d="M-1-3.400L1.500-2-1-.6z" fill={c} stroke="none" /><path d="M-4 4.200h8" strokeWidth="1.800" />
  </g>
);
const Model = () => (
  <svg width="993" height="564" viewBox="271 138 993 564" fill="none" role="img" aria-label="Plumbing_Pumps_Ebara_GPE">
    <defs>
      <linearGradient id="tankBody"><stop offset="0" stopColor="#4f5c98" /><stop offset=".38" stopColor="#8790b6" /><stop offset=".72" stopColor="#5a6088" /><stop offset="1" stopColor="#46558f" /></linearGradient>
      <linearGradient id="tankDome" x1="0" y1="0" x2=".5" y2="1"><stop offset="0" stopColor="#5467ae" /><stop offset=".55" stopColor="#7f8bc0" /><stop offset="1" stopColor="#bcc6f0" /></linearGradient>
      <linearGradient id="pipe" x1="0" y1="0" x2=".15" y2="1"><stop offset="0" stopColor="#4b69c4" /><stop offset=".4" stopColor="#8099e4" /><stop offset="1" stopColor="#3f55a4" /></linearGradient>
    </defs>
    <g stroke="#7c7cc8"><path d="M462 454l134-26M748 400l135-25M528 554l134-26M814 499l134-24M737.500 346v309" /></g>
    <g transform="translate(560 185) scale(.33333)">
      <Tank x={378} y={142} h={250} />
      <Tank x={38} y={202} h={260} />
    </g>
    <g transform="translate(560 370) scale(.33333)" stroke={NAVY} strokeWidth="3">
      <path d="M160 322l290-58 208-36 94 142v64l14 10v16l-470 84-40-14v-65l-58-88-38-15v30h-2z" fill="#7b95e2" fillOpacity=".85" />
      <path d="M180 330l480-92 92 134-495 93z" fill="#94abee" fillOpacity=".8" />
      <path d="M320 310l160-34v60l-140 22z" fill="#4c74b4" fillOpacity=".6" stroke="none" />
      <path d="M257 465v66M257 520l508-84M160 322v42l34-6" />
      <path d="M257 530l508-88 1 18-466 84z" fill="#a9bcf5" />
      <Foot x={168} y={385} /><Foot x={276} y={550} /><Foot x={736} y={465} />
      <path d="M108 148l362-63 105-20 5 55-368 64-100 20c-14-10-14-46-4-56z" fill="url(#pipe)" />
      <path d="M150 45h32v33l5 12v26l-5 8v26h-30v-26l-7-8V90l5-12z" fill="#4666bd" strokeWidth="4" />
      <path d="M146 62h38M145 80h42M145 92h42M147 118h38" strokeWidth="4" />
      <path d="M362 62h24M376 48v28" strokeWidth="8" />
      <path d="M388 50l16-4 4-6 20-2 4-4 12 2v38l-14 4-6-6-18 2-6 6-12-6z" fill="#3f62ba" strokeWidth="4" />
      <circle cx="432" cy="54" r="11" fill="#6c86d4" />
      <path d="M195 160c0-20 30-24 50 0l20 60h-40z" fill="#7d86ae" fillOpacity=".7" />
    </g>
    <g transform="translate(560 185) scale(.33333)"><Motor t="translate(277 -52)" /><Motor /></g>
    <g transform="translate(560 370) scale(.33333)"><PumpBase t="translate(275 -52)" /><PumpBase /></g>
    <g transform="translate(560 185) scale(.33333)"><PumpHead t="translate(275 -52)" /><PumpHead /></g>
    <g transform="translate(560 370) scale(.33333)" stroke={NAVY} strokeWidth="3">
      <path d="M310 445l445-80c18 4 22 44 6 54l-441 84c-22 0-26-50-10-58z" fill="url(#pipe)" fillOpacity=".92" />
      <path d="M312 462l450-82M318 490l450-84" strokeWidth="2" />
      <path d="M470-75h68v567l-56 8-12-8z" fill="#3659c4" fillOpacity=".68" strokeWidth="4" />
      <path d="M482-70v565M528-70v560M496 20v170M508 20v60l-12 18v30l14 20v40" strokeWidth="2" />
      <circle cx="536" cy="402" r="11" fill="#2e4fb5" />
    </g>
    <g transform="translate(560 185) scale(.33333)" stroke="#1737a8" strokeWidth="3">
      <path d="M457 330l113-18 17 33v145l-117 8-13-42z" fill="#304da8" fillOpacity=".78" />
      <path d="M457 330l13 32 117-17M470 362v135M498 372l60-8v112l-60 8zM464 345l112-18M574 348v130" strokeWidth="3" />
    </g>
    <path d="M737.500 346v190" stroke="#16309a" strokeWidth="1.500" />
    <Node x={597} y={428} /><Node x={748} y={400} /><Node x={662} y={528} /><Node x={814} y={499} /><Node x={737} y={346} />
    <Port x={444} y={455} c="#6466a8" /><Port x={900} y={376} c="#3f7fb4" /><Port x={965} y={475} c="#b33bae" /><Port x={509} y={554} c="#b33bae" />
    <path d="M443 452v13l3-2.500 2.500 5 2-1-2.500-5h4z" fill="#111" />
    <path d="M735 667h6l-2 4h2l-5 8 1-6h-3z" fill="#333" />
  </svg>
);
const ViewCube = () => (
  <svg width="100" height="84" viewBox="50 20 300 252" fill="none" stroke="#bbb" strokeWidth="3" role="img" aria-label="ViewCube">
    <defs><radialGradient id="shade"><stop offset="0" stopColor="#999" stopOpacity=".8" /><stop offset="1" stopColor="#999" stopOpacity="0" /></radialGradient></defs>
    <path fillRule="evenodd" d="M54 175c0-120 290-120 290 0s-290 118-290 0zM90 165c0 92 220 92 220 0s-220-92-220 0z" fill="#ececec" strokeDasharray="7 3" />
    <ellipse cx="205" cy="182" rx="84" ry="32" fill="url(#shade)" stroke="none" />
    <path d="M130 46l104-17 38 48-3 94-105 22-31-52z" fill="#f0f0f0" stroke="#888" />
    <path d="M130 46l32 51 110-20-38-48z" fill="#fafafa" stroke="#888" />
    <path d="M162 97l2 96" stroke="#777" />
    <g fill="#777" stroke="none" fontFamily="Liberation Sans, sans-serif" textAnchor="middle">
      <text x="218" y="147" fontSize="24" transform="rotate(-6 218 138)">RETRO</text>
      <text x="200" y="70" fontSize="20" transform="rotate(172 200 62)">ALTO</text>
      <g fontWeight="700" fill="#c4c4c4">
        <text x="248" y="257" fontSize="38" transform="rotate(12 248 245)">N</text>
        <text x="316" y="146" fontSize="32" transform="rotate(80 316 135)">O</text>
        <text x="68" y="196" fontSize="30" transform="rotate(-8 68 186)">E</text>
      </g>
    </g>
    <path d="M142 92v24M150 108v24M142 118l12 14" stroke="#bbb" strokeWidth="4" />
  </svg>
);

/* ---------- data ---------- */
const tabs = ["Architettura", "Struttura", "Sistemi", "Inserisci", "Annota", "Analizza", "Volumetrie e planimetria", "Collabora", "Vista", "Gestisci", "Moduli aggiuntivi", "BIMobject® Evo™", "BIMobject®"];
const groups = [
  { title: "Vincoli", rows: [["Livello", "0 - Piano Terra", "edit"], ["Host", "Livello : 0 - Piano Terra", "dim"], ["Offset", "0.0000"]] },
  { title: "Meccanica", rows: [["Classificazione sistema", "Ritorno di sistema idro...", "dim"], ["Tipo di sistema", "Non definito", "dim"], ["Nome sistema", "", "dim"], ["Abbreviazione di sist...", "", "dim"]] },
  { title: "Dati identità", rows: [["Immagine", ""]] },
];
const tree = [["Viste (tutto)", "views", true], ["Legende", "legend"], ["Abachi/Quantità", "table", true], ["Tavole (tutto)", "sheet"], ["Famiglie", "family", true], ["Gruppi", "group", true], ["Collegamenti Revit", "link"]];
const tags = [[173, 339, "50.8 mm"], [629, 211, "50.8 mm"], [694, 311, "50.8 mm"], [238, 439, "50.8 mm"], [467, 558, "#2"]];

const T = ({ label, left, children }) => <Tool aria-label={label} title={label} $left={left}>{children}</Tool>;

const RibbonPanels = () => (
  <Ribbon>
    <Panel $w={70}>
      <PanelBody><BigTool $w={49} $on><BigIcon><ArrowIcon /></BigIcon>Modifica</BigTool></PanelBody>
      <PanelTitle>Seleziona <Caret wide /></PanelTitle>
    </Panel>
    <Panel $w={56}>
      <PanelBody>
        <Grid $cols="35px" $row={35}>
          <PropToggle aria-label="Proprietà del tipo"><TypePropsIcon /></PropToggle>
          <PropToggle aria-label="Proprietà" $on><PropsIcon /></PropToggle>
        </Grid>
      </PanelBody>
      <PanelTitle>Proprietà</PanelTitle>
    </Panel>
    <Panel $w={81}>
      <PanelBody $gap={7}>
        <BigTool $w={44} $dim><BigIcon><PasteIcon /></BigIcon>Incolla<Caret dim /></BigTool>
        <Grid $cols="20px"><T label="Taglia negli Appunti"><ScissorsIcon /></T><T label="Copia negli Appunti"><CopyIcon /></T><T label="Corrispondenza proprietà"><MatchIcon /></T></Grid>
      </PanelBody>
      <PanelTitle>Appunti</PanelTitle>
    </Panel>
    <Panel $w={140}>
      <PanelBody>
        <Grid $cols="57px 16px 24px 22px 12px">
          <Tool $left><CopeIcon />Cimasa</Tool><T label="Opzioni cimasa"><Caret /></T><T label="Apertura muro"><WallOpenIcon /></T><T label="Dividi superficie"><FaceIcon /></T><span />
          <Tool $left><CutIcon />Taglia</Tool><T label="Opzioni taglia" left><Caret /></T><T label="Unioni travi"><BeamIcon /></T><T label="Dividi"><SplitFaceIcon /></T><T label="Altro"><Caret /></T>
          <Tool $left><JoinIcon />Unisci</Tool><T label="Opzioni unisci" left><Caret /></T><T label="Unione muri"><WallJoinIcon /></T><T label="Demolisci"><HammerIcon /></T><span />
        </Grid>
      </PanelBody>
      <PanelTitle>Geometria</PanelTitle>
    </Panel>
    <Panel $w={224}>
      <PanelBody $gap={3}>
        <Grid $cols="repeat(4, 37px)" $row={34}>
          <T label="Allinea"><AlignIcon /></T><T label="Offset"><OffsetIcon /></T><T label="Specchia - Scegli asse"><MirrorPickIcon /></T><T label="Specchia - Disegna asse"><MirrorDrawIcon /></T>
          <T label="Sposta"><MoveIcon /></T><T label="Copia"><CopyElIcon /></T><T label="Ruota"><RotateIcon /></T><T label="Taglia/Estendi ad angolo"><TrimIcon /></T>
        </Grid>
        <Grid $cols="repeat(3, 23px)">
          <T label="Dividi elemento"><SplitIcon /></T><T label="Dividi con spazio"><SplitIcon gap /></T><T label="Sblocca"><PinIcon dim /></T>
          <T label="Matrice"><ArrayIcon /></T><T label="Scala"><ScaleIcon /></T><T label="Blocca"><PinIcon /></T>
          <T label="Taglia singolo"><TrimOneIcon /></T><T label="Taglia multiplo"><TrimOneIcon multi /></T><T label="Elimina"><DeleteIcon /></T>
        </Grid>
      </PanelBody>
      <PanelTitle>Modifica</PanelTitle>
    </Panel>
    <Panel $w={60}>
      <PanelBody>
        <Grid $cols="22px 10px 24px">
          <T label="Nascondi"><BulbIcon /></T><T label="Opzioni nascondi"><Caret /></T><T label="Sposta elementi"><BoxesIcon /></T>
          <T label="Sostituisci grafica"><BrushIcon /></T><T label="Opzioni grafica"><Caret /></T><T label="Linee"><LineIcon /></T>
          <T label="Casella di selezione"><BarIcon /></T>
        </Grid>
      </PanelBody>
      <PanelTitle>Vista</PanelTitle>
    </Panel>
    <Panel $w={51}>
      <PanelBody>
        <Grid $cols="36px 12px" $row={34}>
          <T label="Misura"><MeasureIcon /></T><T label="Opzioni misura"><Caret dim /></T>
          <T label="Quota"><DimIcon /></T><T label="Opzioni quota"><Caret /></T>
        </Grid>
      </PanelBody>
      <PanelTitle>Misura</PanelTitle>
    </Panel>
    <Panel $w={79} $gap>
      <PanelBody>
        <Grid $cols="repeat(2, 36px)" $row={34}>
          <T label="Crea gruppo"><GroupIcon /></T><T label="Crea assieme"><AssemblyIcon /></T><T label="Crea parti"><PartsIcon /></T><T label="Crea simile"><SimilarIcon /></T>
        </Grid>
      </PanelBody>
      <PanelTitle>Crea</PanelTitle>
    </Panel>
    <Panel $w={55}>
      <PanelBody><BigTool $w={54}><BigIcon><EditFamilyIcon /></BigIcon>Modifica<br />famiglia</BigTool></PanelBody>
      <PanelTitle $green>Modalità</PanelTitle>
    </Panel>
    <Panel $w={48}>
      <PanelBody><BigTool $w={47}><BigIcon><ConnectIcon /></BigIcon>Collega</BigTool></PanelBody>
      <PanelTitle $green>Layout</PanelTitle>
    </Panel>
    <Panel $w={136}>
      <PanelBody><BigTool $w={78}><BigIcon><PowerIcon /></BigIcon>Alimentazione</BigTool><BigTool $w={54}><BigIcon><PipingIcon /></BigIcon>Tubazioni</BigTool></PanelBody>
      <PanelTitle $green>Crea sistemi</PanelTitle>
    </Panel>
  </Ribbon>
);

const PropertiesPanel = () => (
  <>
    <DockTitle>Proprietà<CloseButton aria-label="Chiudi proprietà"><Cross /></CloseButton></DockTitle>
    <Properties>
      <TypePicker>
        <Thumb>
          <svg width="42" height="52" viewBox="48 96 126 156" fill="none" stroke="#333" strokeWidth="4" aria-hidden="true">
            <path d="M52 212l30-12 56 22-30 24z" fill="#ddd" stroke="#777" />
            <rect x="136" y="138" width="28" height="54" rx="13" fill="#eee" stroke="#777" strokeWidth="3" />
            <path d="M76 135h32v85H84z" fill="#2d3a66" /><path d="M108 145h24v80h-24z" fill="#24407e" />
            <circle cx="92" cy="116" r="15" fill="#555" /><circle cx="119" cy="131" r="14" fill="#444" />
            <path d="M88 108l8-2M114 124l8-2" stroke="#bbb" />
            <path d="M80 140v100M100 190v50M125 190v48M70 142h14v20H70z" stroke="#bbb" /><path d="M60 218l60 26M96 160v40M118 180v40" stroke="#222" />
          </svg>
        </Thumb>
        <TypeText>Plumbing_Pumps_Ebara_GPE<br />2GPE EVMSG5 7N5/1,5 ETM EDM</TypeText>
        <Caret wide />
      </TypePicker>
      <FilterRow>
        <SelectBox><Select aria-label="Filtro"><option>Apparecchi idraulici (1)</option></Select><Chevron /></SelectBox>
        <EditType>
          <svg width="13" height="13" viewBox="0 0 13 13" fill="#fff" stroke="#555" aria-hidden="true"><path d="M.5 1.500l1-1h4v4h-5zM6.500 1.500l1-1h4v4M.5 6.500h5v5h-5z" /><path d="M6.500 5.500h5v7h-5zM8 8h2M8 10h2" /></svg>
          Modifica tipo
        </EditType>
      </FilterRow>
      <GridWrap>
        <PropTable>
          <colgroup><col width="123" /><col width="124" /></colgroup>
          <tbody>
            {groups.map((g) => (
              <React.Fragment key={g.title}>
                <tr>
                  <GroupCell colSpan={2}><div>{g.title}<svg width="6" height="8" viewBox="0 0 6 8" fill="none" stroke="#333" aria-hidden="true"><path d="M1 4l2-2 2 2M1 7l2-2 2 2" /></svg></div></GroupCell>
                </tr>
                {g.rows.map(([n, v, mode]) => (
                  <tr key={n}>
                    <NameCell scope="row" $dim={mode === "dim"}>{n}</NameCell>
                    <ValueCell $dim={mode === "dim"} $edit={mode === "edit"}>{mode === "edit" ? <ValueInput aria-label={n} defaultValue={v} /> : v}</ValueCell>
                  </tr>
                ))}
              </React.Fragment>
            ))}
          </tbody>
        </PropTable>
        <GridScroll><Chevron up /><GridThumb /><GridSpacer /><Chevron /></GridScroll>
      </GridWrap>
      <PropFooter><a href="#guida">Guida alle proprietà</a><Apply disabled>Applica</Apply></PropFooter>
    </Properties>
  </>
);

export default function App() {
  return (
    <Shell>
      <Global />
      <Frame>
        <TitleBar>
          <AppButton aria-label="Menu applicazione"><svg width="28" height="9" viewBox="0 0 28 9"><path d="M4 0l-1 3h5l1-3zM11 0l9 5-4-5z" fill="#1d2f78" /></svg></AppButton>
          <QuickMark /><TitleCaption /><SearchStub /><TitleEnd />
        </TitleBar>
        <Tabs>
          {tabs.map((t) => <Tab key={t}>{t}</Tab>)}
          <Tab $active>Modifica | Apparecchi idraulici</Tab>
          <TabTools><MinimizeRibbon aria-label="Riduci barra multifunzione"><Caret up /></MinimizeRibbon><Caret /></TabTools>
        </Tabs>
        <RibbonPanels />
        <OptionsBar>Modifica | Apparecchi idraulici</OptionsBar>
        <Work>
          <Side>
            <PropertiesPanel />
            <DockTitle>Browser di progetto - Progetto1<CloseButton aria-label="Chiudi browser"><Cross /></CloseButton></DockTitle>
            <Browser>
              <Tree>
                {tree.map(([label, kind, plus], i) => (
                  <TreeItem key={label}><TreeIcon kind={kind} plus={plus} first={i === 0} last={i === tree.length - 1} /><TreeLabel $on={i === 0}>{label}</TreeLabel></TreeItem>
                ))}
              </Tree>
            </Browser>
          </Side>
          <Canvas>
            <Model />
            {tags.map(([x, y, t]) => <Tag key={`${x}-${y}`} $x={x} $y={y}>{t}</Tag>)}
            <WindowTools>
              <Tool aria-label="Riduci a icona"><svg width="9" height="9" fill="#fff" stroke="#555"><path d="M.5 5.500h8v2h-8z" /></svg></Tool>
              <Tool aria-label="Ripristina"><svg width="9" height="9" fill="#fff" stroke="#555"><path d="M2.500.5h6v6h-6zM.5 2.500h5v6h-5zM2 5.500h2" /></svg></Tool>
              <Tool aria-label="Chiudi vista"><svg width="9" height="9" fill="none"><path d="M1 1l7 7M8 1l-7 7" stroke="#444" strokeWidth="3" /><path d="M1 1l7 7M8 1l-7 7" stroke="#fff" /></svg></Tool>
            </WindowTools>
            <CubePlace><ViewCube /></CubePlace>
            <NavBar>
              <svg width="25" height="86" viewBox="0 0 25 86" fill="none" stroke="#aaa" aria-hidden="true">
                <circle cx="20" cy="4.500" r="2.500" /><circle cx="20" cy="81.500" r="2.500" />
                <path d="M12 15h8v9a8 8 0 1 1-8-9z" fill="#e4e4e4" /><circle cx="12.500" cy="23" r="4" fill="#fff" />
                <path d="M2 42.500h20" /><path d="M10 37h4l-2 3zM10 69h4l-2 3z" fill="#777" stroke="none" />
                <path d="M7 50h8v8H7z" fill="#9cc79a" stroke="#8bb08a" /><circle cx="15" cy="57" r="3" fill="#fff" /><path d="M17 59l3 3" />
              </svg>
            </NavBar>
          </Canvas>
          <VScroll><Chevron up /><VThumb /><Chevron /></VScroll>
        </Work>
      </Frame>
      <Footer>
        <Brand><BrandMark />TESTO</Brand>
        <StatusBar>
          1 : 100
          <svg width="284" height="12" viewBox="0 0 284 12" fill="none" stroke="#e2e2e2" aria-hidden="true">
            {Array.from({ length: 14 }, (_, i) => <path key={i} d={`M${22 + i * 18} 4h9v8h-9zM${24 + i * 18} 7h5`} stroke={i === 2 ? "#f2e2c0" : i % 3 === 1 ? "#d5deee" : "#e2e2e2"} />)}
          </svg>
          <StatusThumb />
        </StatusBar>
      </Footer>
    </Shell>
  );
}
